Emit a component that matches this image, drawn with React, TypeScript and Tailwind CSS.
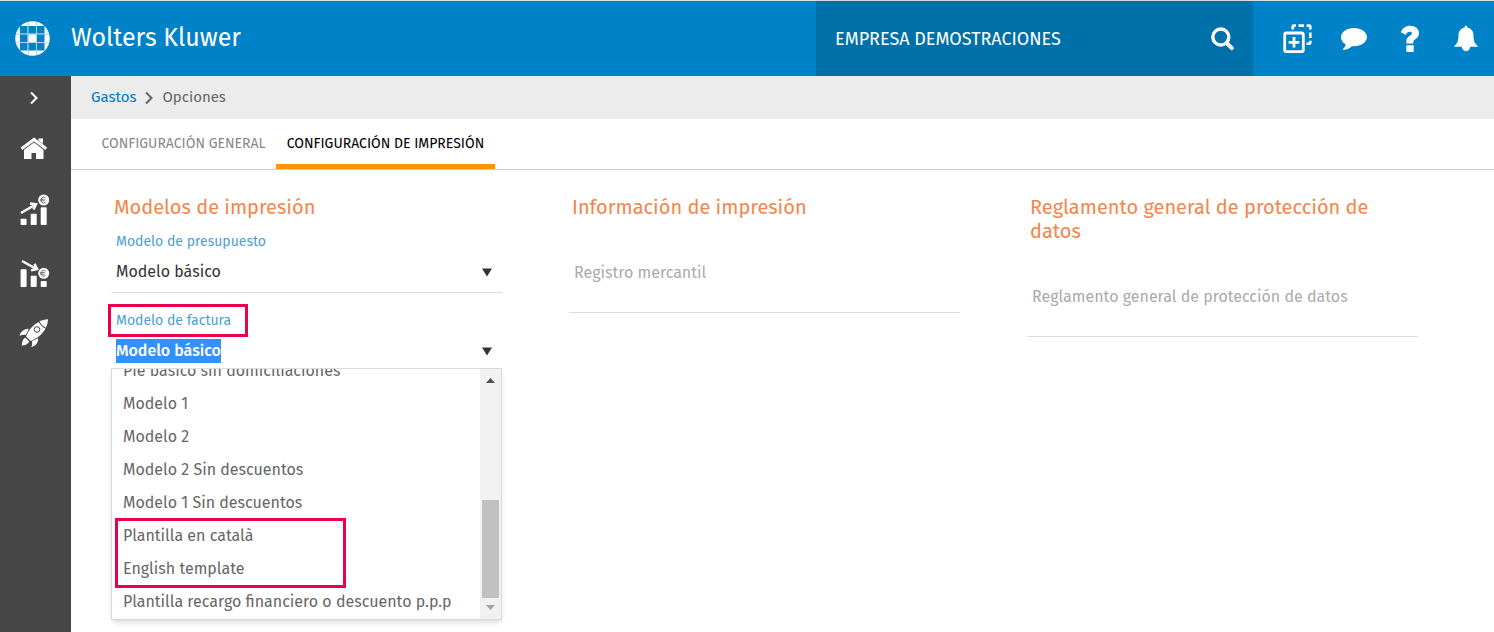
import React from 'react'

const TEMPLATES = [
  'Pie básico sin domiciliaciones',
  'Modelo 1',
  'Modelo 2',
  'Modelo 2 Sin descuentos',
  'Modelo 1 Sin descuentos',
  'Plantilla en català',
  'English template',
  'Plantilla recargo financiero o descuento p.p.p',
]

const GLOBE_STEPS = [5, 13.5, 22]

const GlobeLogo: React.FC = () => (
  <svg viewBox="0 0 35 35" className="h-[35px] w-[35px]" aria-hidden="true">
    <circle cx="17.5" cy="17.5" r="17.3" fill="#fff" />
    <path d="M13.2 1v33M21.7 1v33M1 13.2h33M1 21.7h33" stroke="#8cc5e6" strokeWidth="0.8" />
    {GLOBE_STEPS.map((x) =>
      GLOBE_STEPS.filter((y) => x !== 13.5 || y !== 13.5).map((y) => (
        <rect key={`${x}-${y}`} x={x} y={y} width="7.5" height="7.5" fill="#0082c8" />
      )),
    )}
  </svg>
)

const SearchIcon: React.FC = () => (
  <svg viewBox="0 0 24 24" className="h-6 w-6" fill="none" stroke="#fff" aria-hidden="true">
    <circle cx="9.8" cy="10" r="8" strokeWidth="3.4" />
    <path d="M16 16.3l4.800 4.800" strokeWidth="4" strokeLinecap="round" />
  </svg>
)

const AddWindowIcon: React.FC = () => (
  <svg viewBox="0 0 30 30" className="h-[30px] w-[30px]" fill="none" stroke="#fff" aria-hidden="true">
    <rect x="1.7" y="9" width="18.6" height="18.6" rx="1.5" strokeWidth="2.8" />
    <path d="M11 13v10.6M5.7 18.3h10.6" strokeWidth="2.8" />
    <path
      d="M9.7 5.5V2.600q0-1 1-1h2.300M15.500 1.600h5.600M23.700 1.600h2.600q1 0 1 1v3M27.300 8.500v5.600M27.300 16.800v2q0 1-1 1h-2.800"
      strokeWidth="2.6"
    />
  </svg>
)

const CommentIcon: React.FC = () => (
  <svg viewBox="0 0 26 24" className="h-6 w-[26px]" fill="#fff" aria-hidden="true">
    <path d="M13 1C5.8 1 0 5 0 10.2c0 2.9 1.8 5.4 4.7 7.1-.3 2-1.4 3.5-2.6 4.7-.4.5 0 1.1.6 1 3.2-.4 5.9-1.7 8.1-3.8.7.1 1.4.1 2.2.1 7.2 0 13-4.1 13-9.2S20.2 1 13 1z" />
  </svg>
)

const HelpIcon: React.FC = () => (
  <svg viewBox="0 0 20 27" className="h-[27px] w-5" fill="#fff" aria-hidden="true">
    <path d="M6.3 20.2h6.8q.6 0 .6.6v5.5q0 .6-.6.6H6.9q-.6 0-.6-.6z" />
    <path d="M.8 7.2C2.6 3 5.6.8 10 .8c5 0 9 3 9 7.3 0 3.4-1.8 5-3.9 6.3-1.2.8-1.8 1.4-1.8 2.4v1.8H6.4v-2.800c0-2.500 1.600-4 3.700-5.300 1.200-.7 1.900-1.200 1.900-2.100 0-1-1-1.600-2.300-1.600-1.800 0-2.900 1.200-3.900 3.100z" />
  </svg>
)

const BellIcon: React.FC = () => (
  <svg viewBox="0 0 24 27" className="h-[27px] w-6" fill="#fff" aria-hidden="true">
    <path d="M12 .8c1 0 1.500.7 1.400 1.600 4 .9 6.100 4 6.100 8.100 0 5.700 1.400 8.600 4.300 10.400v.9h-7.600c-.3 2.700-2 4.400-4.200 4.400s-3.900-1.700-4.200-4.400H.2v-.9c2.900-1.800 4.300-4.700 4.300-10.400 0-4.100 2.100-7.200 6.100-8.100C10.500 1.500 11 .8 12 .8z" />
  </svg>
)

const ChevronIcon: React.FC<{ className: string }> = ({ className }) => (
  <svg viewBox="0 0 10 14" className={className} fill="none" stroke="currentColor" aria-hidden="true">
    <path d="M2 1.500l5.500 5.500L2 12.500" strokeWidth="2" />
  </svg>
)

const HomeIcon: React.FC = () => (
  <svg viewBox="0 0 35 36" className="h-9 w-[35px]" aria-hidden="true">
    <path d="M8 18.5l10-8 9.5 8V28h-7.500v-6h-4.500v6H8z" fill="#fff" />
    <path d="M22.5 7.5h4.500V15l-4.500-3.500z" fill="#fff" />
    <path d="M5.5 18L18 8.8 30.2 18" fill="none" stroke="#474747" strokeWidth="4.2" />
    <path d="M5.5 17.8L18 8.500l12.200 9.300" fill="none" stroke="#fff" strokeWidth="3" />
  </svg>
)

/** Euro coin shared by both chart icons */
const Coin: React.FC<{ cy: number }> = ({ cy }) => (
  <g transform={`translate(27.7 ${cy})`}>
    <circle r="6.2" fill="#474747" />
    <circle r="5.5" fill="#fff" />
    <path d="M2-2.200A2.900 2.900 0 1 0 2 2.200M-3.500-.7H1M-3.500.8H1" fill="none" stroke="#666" strokeWidth="0.9" />
  </g>
)

const IncomeIcon: React.FC = () => (
  <svg viewBox="0 0 35 36" className="h-9 w-[35px]" fill="#fff" aria-hidden="true">
    <rect x="4.6" y="25.7" width="6" height="6.3" rx="0.8" />
    <rect x="14.7" y="20.7" width="6" height="11.3" rx="0.8" />
    <rect x="24.7" y="14.3" width="6" height="17.7" rx="0.8" />
    <path d="M5 20l14.500-8.500M14 10.500l6 .7-2.500 5.300" fill="none" stroke="#fff" strokeWidth="2.4" />
    <Coin cy={7} />
  </svg>
)

const ExpensesIcon: React.FC = () => (
  <svg viewBox="0 0 35 36" className="h-9 w-[35px]" fill="#fff" aria-hidden="true">
    <rect x="4.6" y="14.3" width="6" height="17.7" rx="0.8" />
    <rect x="14.7" y="20.7" width="6" height="11.3" rx="0.8" />
    <rect x="24.7" y="26" width="6" height="6" rx="0.8" />
    <path d="M6 6l14.500 8M18.500 8.800l2.600 5.400-6 1" fill="none" stroke="#fff" strokeWidth="2.4" />
    <Coin cy={18.3} />
  </svg>
)

const RocketIcon: React.FC = () => (
  <svg viewBox="0 0 35 36" className="h-9 w-[35px]" fill="#fff" aria-hidden="true">
    <path d="M23.5 4.500c2.500-1.300 5.300-2 8.500-2.200-.1 3.200-.9 6-2.200 8.500-2.700-1.400-4.800-3.500-6.300-6.300z" />
    <path d="M22.7 4.900c1.500 2.900 3.700 5.100 6.800 6.700-3.200 6-8.300 9.900-14.700 12.400l-4.700-4.600C12.400 13 17 7.700 22.700 4.900z" />
    <path d="M12.8 11.800L9.800 18c-2-.4-4 0-6.300.8 1.300-4.400 4.500-6.900 9.300-7z" />
    <path d="M22.2 21.200L16 24.200c.5 2.100 0 3.800-.6 6 4.400-1.500 6.800-4.400 6.800-9z" />
    <path d="M9.300 20.800l3.900 3.700c-.8 2.400-3.400 3.800-7.400 4 .1-4 1.300-6.700 3.500-7.700z" />
    <circle cx="21" cy="12.500" r="2.800" fill="none" stroke="#474747" strokeWidth="1" />
  </svg>
)

const NAV_ITEMS = [
  { label: 'Inicio', Icon: HomeIcon },
  { label: 'Ingresos', Icon: IncomeIcon },
  { label: 'Gastos', Icon: ExpensesIcon },
  { label: 'Puesta en marcha', Icon: RocketIcon },
]

const ACTIONS = [
  { label: 'Nueva ventana', Icon: AddWindowIcon },
  { label: 'Mensajes', Icon: CommentIcon },
  { label: 'Ayuda', Icon: HelpIcon },
  { label: 'Notificaciones', Icon: BellIcon },
]

const CaretDown: React.FC = () => (
  <svg viewBox="0 0 10 9" className="h-[9px] w-[10px]" aria-hidden="true">
    <path d="M0 .5h10L5 8.500z" fill="#333" />
  </svg>
)

const Header: React.FC = () => (
  <header className="flex h-[76px] border-t border-[#d3dde3] bg-[#0082c8] text-white">
    <div className="flex flex-1 items-center pl-[15px]">
      <GlobeLogo />
      <span className="ml-[21px] text-[25px]">Wolters Kluwer</span>
    </div>
    <div className="flex w-[437px] items-center justify-between bg-[#0070a9] pr-[18px] pl-[19px]">
      <span className="text-lg">EMPRESA DEMOSTRACIONES</span>
      <button type="button" aria-label="Buscar">
        <SearchIcon />
      </button>
    </div>
    <div className="flex w-[241px] items-center pl-[17px]">
      {ACTIONS.map(({ label, Icon }) => (
        <button key={label} type="button" aria-label={label} className="flex h-full w-14 items-center justify-center">
          <Icon />
        </button>
      ))}
    </div>
  </header>
)

const Sidebar: React.FC = () => (
  <nav className="flex w-[71px] shrink-0 flex-col bg-[#474747] pr-1 text-white" aria-label="Principal">
    <button type="button" aria-label="Expandir menú" className="flex h-[42px] items-center justify-center pt-[2px]">
      <ChevronIcon className="h-[14px] w-[10px]" />
    </button>
    {NAV_ITEMS.map(({ label, Icon }) => (
      <a key={label} href="#" aria-label={label} className="flex h-[62px] items-center justify-center">
        <Icon />
      </a>
    ))}
  </nav>
)

const TemplateList: React.FC = () => (
  <div className="absolute inset-x-0 top-full -mt-1 flex h-[252px] border border-[#dcdcdc] bg-white shadow-md">
    <ul
      id="templates"
      role="listbox"
      aria-label="Modelo de factura"
      className="flex flex-1 flex-col justify-end overflow-hidden text-base text-[#666]"
    >
      {TEMPLATES.map((name) => (
        <li key={name} role="option" aria-selected="false" className="h-[33px] shrink-0 pl-[11px] leading-8 whitespace-nowrap">
          {name}
        </li>
      ))}
    </ul>
    <div className="flex w-[21px] flex-col items-center bg-[#f1f1f1] py-[9px]" aria-hidden="true">
      <svg viewBox="0 0 9 5" className="h-[5px] w-[9px]">
        <path d="M0 5h9L4.5 0z" fill="#505050" />
      </svg>
      <div className="mt-auto mb-[7px] h-[98px] w-[17px] bg-[#c1c1c1]" />
      <svg viewBox="0 0 9 5" className="h-[5px] w-[9px]">
        <path d="M0 0h9L4.5 5z" fill="#a3a3a3" />
      </svg>
    </div>
    <div className="pointer-events-none absolute top-[149px] left-[3px] h-[70px] w-[231px] border-3 border-[#ea0050]" />
  </div>
)

const PrintTemplates: React.FC = () => (
  <section>
    <h2 className="pl-[3px] text-xl leading-6 text-[#f5854a]">Modelos de impresión</h2>
    <div className="mt-[13px] border-b border-[#dcdcdc] pb-1">
      <label htmlFor="quote" className="block pl-[5px] text-sm leading-5 text-[#4b9fd5]">
        Modelo de presupuesto
      </label>
      <div className="mt-1 grid items-center">
        <select id="quote" className="col-start-1 row-start-1 h-8 appearance-none pl-[5px] text-base text-[#333]">
          <option>Modelo básico</option>
        </select>
        <span className="pointer-events-none col-start-1 row-start-1 mr-[10px] justify-self-end">
          <CaretDown />
        </span>
      </div>
    </div>
    <div className="relative mt-[18px] border-b border-[#0082c8] pb-[5px]">
      <label htmlFor="invoice" className="block pl-[5px] text-sm leading-5 text-[#4b9fd5]">
        Modelo de factura
      </label>
      <div className="mt-1 flex h-8 items-center justify-between pr-[10px] pl-[5px]">
        <input
          id="invoice"
          role="combobox"
          aria-expanded="true"
          aria-controls="templates"
          defaultValue="Modelo básico"
          className="field-sizing-content h-6 bg-[#3390ff] text-base font-medium text-white outline-none"
        />
        <CaretDown />
      </div>
      <div className="pointer-events-none absolute -top-[7px] -left-[3px] h-[33px] w-[140px] border-3 border-[#ea0050]" />
      <TemplateList />
    </div>
  </section>
)

const NoteField: React.FC<{ id: string; title: string; placeholder: string }> = ({ id, title, placeholder }) => (
  <section>
    <h2 className="pl-[3px] text-xl leading-6 text-[#f5854a]">{title}</h2>
    <textarea
      id={id}
      aria-label={placeholder}
      placeholder={placeholder}
      rows={1}
      className="mt-7 block h-[66px] w-full resize-none border-b border-[#dcdcdc] px-[5px] pt-[14px] text-base leading-6 outline-none placeholder:text-[#aaa]"
    />
  </section>
)

export default function App() {
  return (
    <div className="flex min-h-screen flex-col bg-white font-['Fira_Sans','Noto_Sans',sans-serif]">
      <Header />
      <div className="flex flex-1">
        <Sidebar />
        <main className="min-w-0 flex-1">
          <nav className="flex h-[43px] items-center bg-[#ececec] pl-5 text-[15px] text-[#666]" aria-label="Ruta">
            <a href="#" className="text-[#007ac3]">
              Gastos
            </a>
            <ChevronIcon className="mx-2 h-[14px] w-[10px]" />
            <span>Opciones</span>
          </nav>
          <div role="tablist" className="flex h-[51px] border-b border-[#ccc] pl-5 text-sm">
            <button role="tab" type="button" aria-selected="false" className="w-[185px] border-b-5 border-transparent pt-1 text-[#888]">
              CONFIGURACIÓN GENERAL
            </button>
            <button role="tab" type="button" aria-selected="true" className="w-[219px] border-b-5 border-[#ff9400] pt-1 text-black">
              CONFIGURACIÓN DE IMPRESIÓN
            </button>
          </div>
          <div className="grid grid-cols-3 gap-[67px] pt-[25px] pr-[76px] pl-10">
            <PrintTemplates />
            <NoteField id="registry" title="Información de impresión" placeholder="Registro mercantil" />
            <NoteField
              id="gdpr"
              title="Reglamento general de protección de datos"
              placeholder="Reglamento general de protección de datos"
            />
          </div>
        </main>
      </div>
    </div>
  )
}
